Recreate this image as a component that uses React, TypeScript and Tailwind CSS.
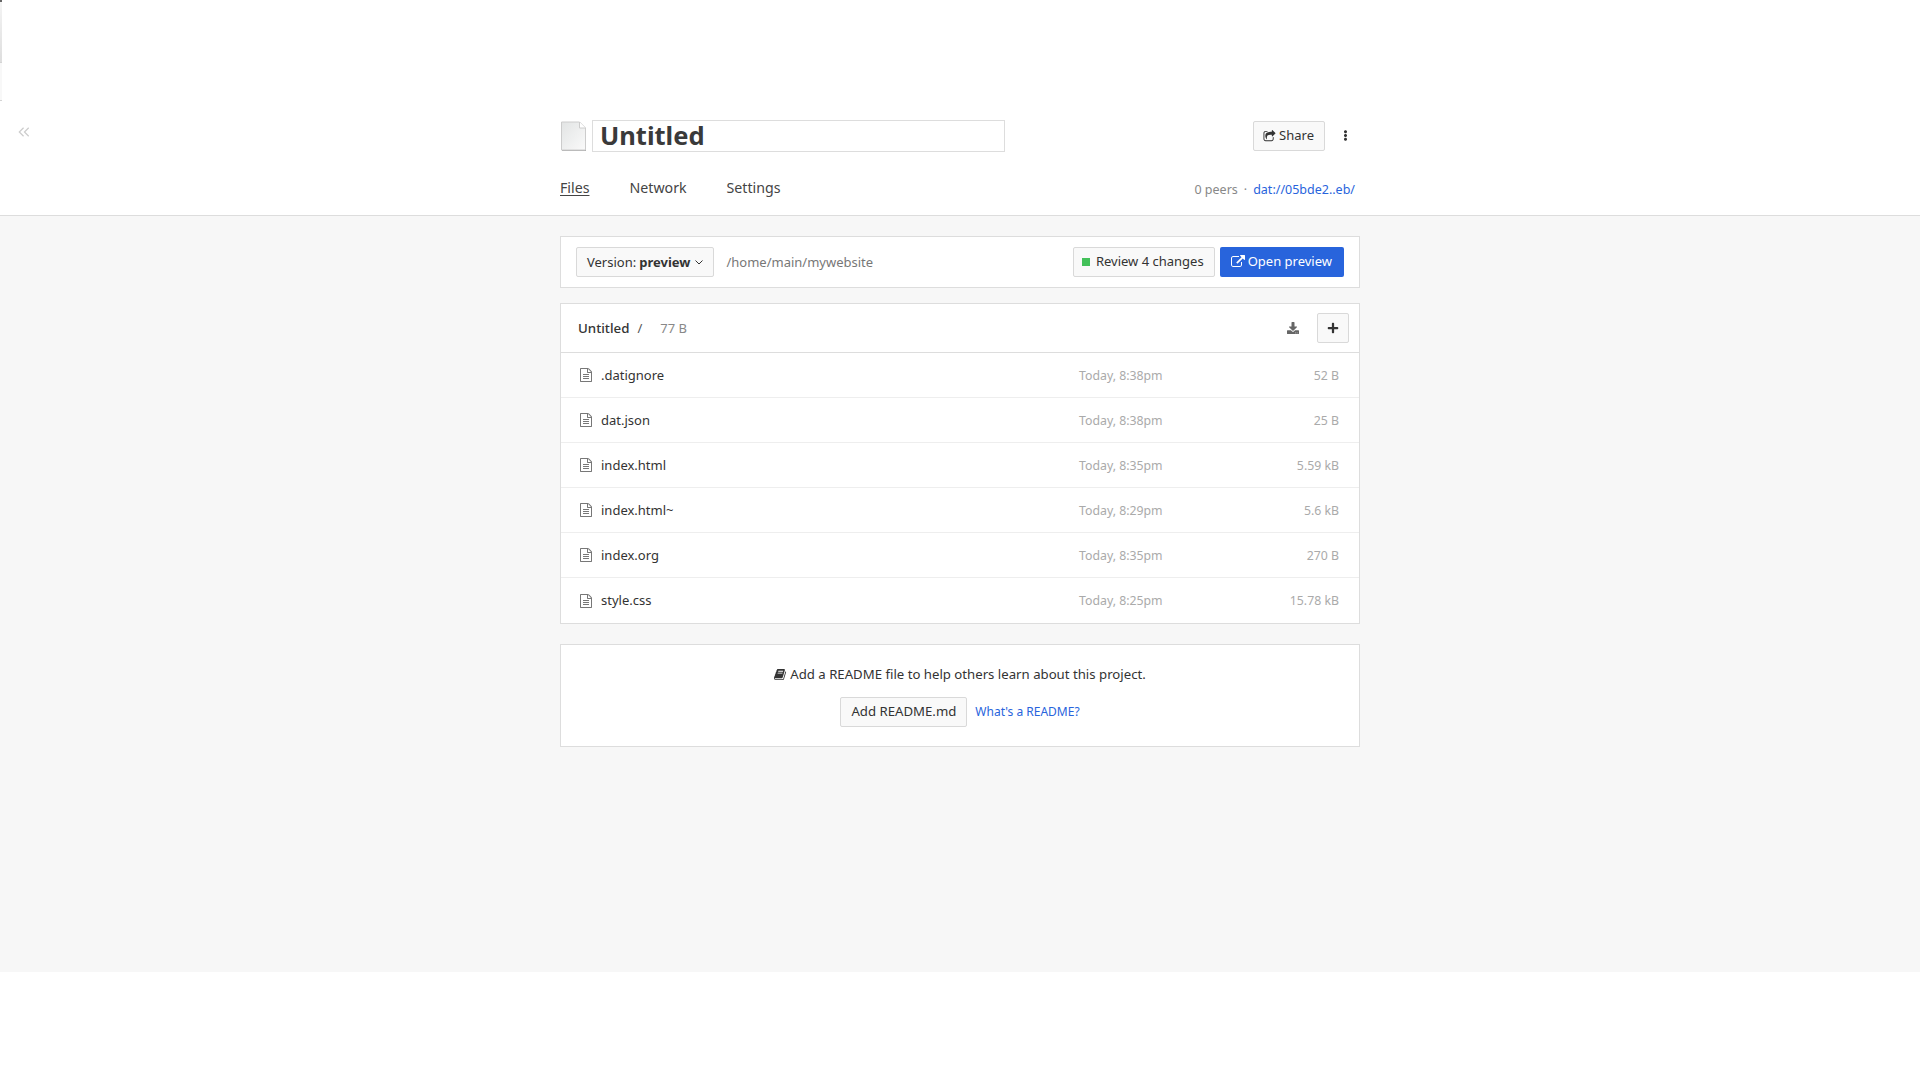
import { FaDownload, FaEllipsisV, FaPlus } from "react-icons/fa";

const files = [
  [".datignore", "Today, 8:38pm", "52 B"],
  ["dat.json", "Today, 8:38pm", "25 B"],
  ["index.html", "Today, 8:35pm", "5.59 kB"],
  ["index.html~", "Today, 8:29pm", "5.6 kB"],
  ["index.org", "Today, 8:35pm", "270 B"],
  ["style.css", "Today, 8:25pm", "15.78 kB"],
];

const btn = "flex items-center rounded-[2px] border border-[#d9d9d9] bg-[#f9f9f9] text-[#333]";

function Fa({ d, className }: { d: string; className?: string }) {
  return (
    <svg viewBox="0 0 1792 1792" fill="currentColor" className={className}>
      <path d={d} />
    </svg>
  );
}

const SHARE = "M1472 989v259q0 119-84.5 203.5t-203.5 84.5h-832q-119 0-203.5-84.5t-84.5-203.5v-832q0-119 84.5-203.5t203.5-84.5h255q13 0 22.5 9.5t9.5 22.5q0 27-26 32-77 26-133 60-10 4-16 4h-112q-66 0-113 47t-47 113v832q0 66 47 113t113 47h832q66 0 113-47t47-113v-214q0-19 18-29 28-13 54-37 16-16 35-8 21 9 21 29zm237-496l-384 384q-18 19-45 19-12 0-25-5-39-17-39-59v-192h-160q-323 0-438 131-119 137-74 473 3 23-20 34-8 2-12 2-16 0-26-13-10-14-21-31t-39.5-68.5-49.5-99.5-38.5-114-17.5-122q0-49 3.5-91t14-90 28-88 47-81.5 68.5-74 94.5-61.5 124.5-48.5 159.5-30.5 196.5-11h160v-192q0-42 39-59 13-5 25-5 26 0 45 19l384 384q19 19 19 45t-19 45z";
const EXT = "M1408 928v320q0 119-84.5 203.5t-203.5 84.5h-832q-119 0-203.5-84.5t-84.5-203.5v-832q0-119 84.5-203.5t203.5-84.5h704q14 0 23 9t9 23v64q0 14-9 23t-23 9h-704q-66 0-113 47t-47 113v832q0 66 47 113t113 47h832q66 0 113-47t47-113v-320q0-14 9-23t23-9h64q14 0 23 9t9 23zm384-864v512q0 26-19 45t-45 19-45-19l-176-176-652 652q-10 10-23 10t-23-10l-114-114q-10-10-10-23t10-23l652-652-176-176q-19-19-19-45t19-45 45-19h512q26 0 45 19t19 45z";
const FILE = "M1596 380q28 28 48 76t20 88v1152q0 40-28 68t-68 28h-1344q-40 0-68-28t-28-68v-1600q0-40 28-68t68-28h896q40 0 88 20t76 48zm-444-244v376h376q-10-29-22-41l-313-313q-12-12-41-22zm384 1528v-1024h-416q-40 0-68-28t-28-68v-416h-768v1536h1280zm-1024-864q0-14 9-23t23-9h704q14 0 23 9t9 23v64q0 14-9 23t-23 9h-704q-14 0-23-9t-9-23v-64zm736 224q14 0 23 9t9 23v64q0 14-9 23t-23 9h-704q-14 0-23-9t-9-23v-64q0-14 9-23t23-9h704zm0 256q14 0 23 9t9 23v64q0 14-9 23t-23 9h-704q-14 0-23-9t-9-23v-64q0-14 9-23t23-9h704z";
const BOOK = "M1639 478q40 57 18 129l-275 906q-19 64-76.5 107.5t-122.5 43.5h-923q-77 0-148.5-53.5t-99.5-131.5q-24-67-2-127 0-4 3-27t4-37q1-8-3-21.5t-3-19.5q2-11 8-21t16.5-23.5 16.5-23.5q23-38 45-91.5t30-91.5q3-10 .5-30t-.5-28q3-11 17-28t17-23q21-36 42-92t25-90q1-9-2.5-32t.5-28q4-13 22-30.5t22-22.5q19-26 42.5-84.5t27.5-96.5q1-8-3-25.5t-2-26.5q2-8 9-18t18-23 17-21q8-12 16.5-30.5t15-35 16-36 19.5-32 26.5-23.5 36-11.5 47.5 5.5l-1 3q38-9 51-9h761q74 0 114 56t18 130l-274 906q-36 119-71.5 153.5t-128.5 34.5h-869q-27 0-38 15-11 16-1 43 24 70 144 70h923q29 0 56-15.5t35-41.5l300-987q7-22 5-57 38 15 59 43zm-1064 2q-4 13 2 22.5t20 9.5h608q13 0 25.5-9.5t16.5-22.5l21-64q4-13-2-22.5t-20-9.5h-608q-13 0-25.5 9.5t-16.5 22.5zm-83 256q-4 13 2 22.5t20 9.5h608q13 0 25.5-9.5t16.5-22.5l21-64q4-13-2-22.5t-20-9.5h-608q-13 0-25.5 9.5t-16.5 22.5z";

export default function App() {
  return (
    <div className="relative h-[1080px] w-[1920px] bg-white font-['Noto_Sans',sans-serif] text-[13px] text-[#333]">
      <div className="absolute left-0 top-0 h-[62px] w-[2px] border-t-2 border-[#666] bg-gradient-to-b from-[#f4f4f4] to-[#dedede]" />
      <div className="absolute left-0 top-[62px] h-[39px] w-[2px] border-t border-b border-[#d4d4d4] bg-[#f8f8f8]" />
      <header className="h-[216px] border-b border-[#ddd] pt-[120px]">
        <div className="relative mx-auto w-[800px]">
          <svg viewBox="0 0 14 12" fill="none" stroke="#ccc" strokeWidth="1.4" className="absolute left-[-542px] top-[6px] h-[12px] w-[12px]">
            <path d="M6.5 1 1.5 6l5 5M12.5 1l-5 5 5 5" />
          </svg>
          <div className="flex h-[32px] items-center">
            <svg width="27" height="31" viewBox="0 0 27 31" className="shrink-0">
              <defs>
                <linearGradient id="g" x1="0" y1="0" x2="1" y2="1">
                  <stop offset="0" stopColor="#e2e4e4" />
                  <stop offset="1" stopColor="#fafafa" />
                </linearGradient>
              </defs>
              <path d="M2 1.5H20L26 7.5V30H2Z" fill="#aaa" />
              <path d="M1.5 1H19.5L25.5 7V29H1.5Z" fill="url(#g)" stroke="#ccc" />
              <path d="M19.5 1V7H25.5" fill="#fff" stroke="#ccc" />
            </svg>
            <div className="ml-[5px] flex h-[32px] w-[413px] items-center border border-[#ddd] pb-[2px] pl-[7px] text-[25.5px] font-bold text-[#3a3a3a]">Untitled</div>
            <div className={`${btn} ml-auto mr-[35px] h-[30px] gap-[3px] pl-[9px] pr-[10px] text-[13px]`}>
              <Fa d={SHARE} className="h-[13px] w-[13px]" />
              Share
            </div>
          </div>
          <FaEllipsisV className="absolute left-[780px] top-[10px] text-[11px] text-[#333]" />
          <nav className="mt-[20px] flex h-[30px] items-center gap-[40px] pt-[1px] text-[14.2px] text-[#444]">
            <span className="underline underline-offset-2">Files</span>
            <span>Network</span>
            <span>Settings</span>
            <div className="ml-auto mr-[5px] flex items-center pt-[5px] text-[12.5px] text-[#888]">
              0 peers
              <span className="mx-[6px]">·</span>
              <span className="text-[#2864dc]">dat://05bde2..eb/</span>
            </div>
          </nav>
        </div>
      </header>

      <main className="h-[756px] bg-[#f7f7f7] pt-[20px]">
        <div className="mx-auto flex w-[800px] flex-col">
          <section className="flex h-[52px] items-center border border-[#ddd] bg-white pl-[15px] pr-[15px]">
            <div className={`${btn} h-[30px] gap-[3px] pl-[10px] pr-[10px] pt-[1px]`}>
              Version: <b className="font-bold">preview</b>
              <svg viewBox="0 0 8 5" fill="none" stroke="#333" className="ml-[2px] h-[5px] w-[8px]"><path d="M.5.5 4 4 7.5.5" /></svg>
            </div>
            <span className="ml-[12px] pt-[1px] text-[#777]">/home/main/mywebsite</span>
            <div className={`${btn} ml-auto h-[30px] gap-[6px] pl-[8px] pr-[10px]`}>
              <span className="h-[8px] w-[8px] bg-[#43c15a]" />
              Review 4 changes
            </div>
            <div className="ml-[5px] flex h-[30px] items-center gap-[3px] rounded-[2px] bg-[#2864dc] pl-[11px] pr-[12px] text-white">
              <Fa d={EXT} className="h-[14px] w-[14px]" />
              Open preview
            </div>
          </section>

          <section className="mt-[15px] border border-[#ddd] bg-white">
            <div className="flex h-[49px] items-center border-b border-[#ddd] pl-[17px] pr-[10px]">
              <span className="pt-[1px] text-[13.3px] font-medium">Untitled</span>
              <span className="ml-[8px] pt-[1px] text-[#555]">/</span>
              <span className="ml-[18px] pt-[1px] text-[#888]">77 B</span>
              <FaDownload className="ml-auto text-[12px] text-[#666]" />
              <div className={`${btn} ml-[18px] h-[30px] w-[32px] justify-center`}>
                <FaPlus className="text-[12px]" />
              </div>
            </div>
            {files.map(([name, date, size], i) => (
              <div key={name} className={`flex h-[45px] items-center pl-[18px] pr-[20px] pt-[1px] ${i < 5 ? "border-b border-[#eee]" : ""}`}>
                <Fa d={FILE} className="mb-[1px] h-[14px] w-[14px] text-[#777]" />
                <span className="ml-[8px]">{name}</span>
                <span className="ml-auto w-[200px] pt-[1px] text-[12.3px] text-[#aaa]">{date}</span>
                <span className="w-[60px] pt-[1px] text-right text-[12.3px] text-[#aaa]">{size}</span>
              </div>
            ))}
          </section>

          <section className="mt-[20px] flex h-[103px] flex-col items-center border border-[#ddd] bg-white pt-[20px]">
            <div className="flex items-center gap-[3px] text-[13.2px]">
              <Fa d={BOOK} className="h-[13px] w-[13px]" />
              Add a README file to help others learn about this project.
            </div>
            <div className="mt-[12px] flex items-center gap-[8px]">
              <div className={`${btn} h-[30px] px-[10px] text-[13.2px]`}>Add README.md</div>
              <span className="text-[12px] text-[#2864dc]">What's a README?</span>
            </div>
          </section>
        </div>
      </main>
    </div>
  );
}
